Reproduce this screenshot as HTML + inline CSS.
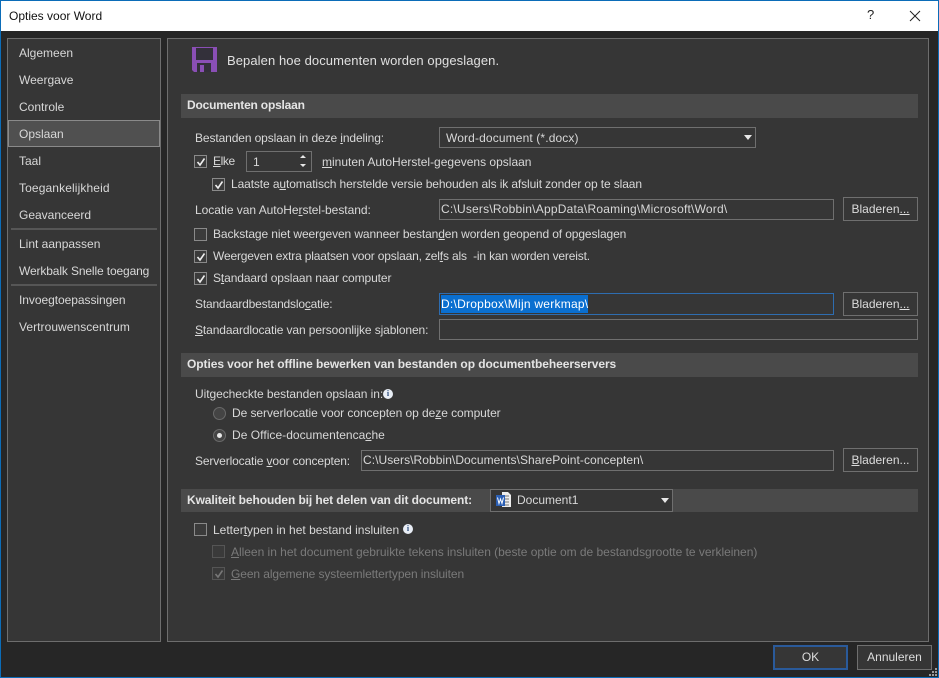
<!DOCTYPE html>
<html lang="nl"><head><meta charset="utf-8"><title>Opties voor Word</title>
<style>
html,body{margin:0;padding:0;background:#262626}
#w{position:relative;width:939px;height:678px;overflow:hidden;background:#262626;font:12px/16px "Liberation Sans",sans-serif;color:#d8d8d8}
#w div,#w span.t{position:absolute;box-sizing:border-box}
.t{white-space:nowrap}
.b{font-weight:bold;color:#e4e4e4}
.p{background:#363636;border:1px solid #6d6d6d}
.h{background:#4a4a4a}
.i{border:1px solid #6f6f6f;background:#363636}
.btn{border:1px solid #6f6f6f;background:#363636;text-align:center;line-height:22px;color:#dcdcdc;white-space:nowrap}
.c{width:13px;height:13px;border:1px solid #8a8a8a;background:#3b3b3b}
.c svg{position:absolute;left:0;top:0}
.dis{color:#7a7a7a}
.r{width:13px;height:13px;border-radius:50%;border:1px solid #6a6a6a;background:#444}
.sep{background:#565656;height:2px}
.inf{width:10px;height:10px;border-radius:50%;background:#e8edf5;color:#2a4a7a;font:bold 8px/10px "Liberation Serif",serif;text-align:center}
</style></head><body>
<div id="w">
<div style="left:0;top:0;width:939px;height:31px;background:#fff"></div>
<div style="left:0;top:0;width:939px;height:1px;background:#0b6cb8"></div>
<div style="left:0;top:0;width:1px;height:678px;background:#0b6cb8"></div>
<div style="left:938px;top:0;width:1px;height:678px;background:#0b6cb8"></div>
<div style="left:0;top:677px;width:939px;height:1px;background:#0b6cb8"></div>
<span class="t" style="left:9px;top:8px;color:#111">Opties voor Word</span>
<span class="t" style="left:867px;top:7px;color:#222;font-size:13px">?</span>
<svg style="position:absolute;left:909px;top:10px" width="12" height="12"><path d="M1 1L11 11M11 1L1 11" stroke="#222" stroke-width="1" fill="none"/></svg>

<div class="p" style="left:7px;top:38px;width:154px;height:604px"></div>
<div class="p" style="left:167px;top:38px;width:762px;height:604px"></div>

<span class="t" style="left:19px;top:45px">Algemeen</span>
<span class="t" style="left:19px;top:72px">Weergave</span>
<span class="t" style="left:19px;top:99px">Controle</span>
<div style="left:8px;top:120px;width:152px;height:27px;background:#505050;border:1px solid #8a8a8a"></div>
<span class="t" style="left:19px;top:126px">Opslaan</span>
<span class="t" style="left:19px;top:153px">Taal</span>
<span class="t" style="left:19px;top:180px;letter-spacing:.12px">Toegankelijkheid</span>
<span class="t" style="left:19px;top:207px">Geavanceerd</span>
<div class="sep" style="left:11px;top:228px;width:146px"></div>
<span class="t" style="left:19px;top:236px">Lint aanpassen</span>
<span class="t" style="left:19px;top:263px;letter-spacing:-.13px">Werkbalk Snelle toegang</span>
<div class="sep" style="left:11px;top:284px;width:146px"></div>
<span class="t" style="left:19px;top:292px;letter-spacing:-.05px">Invoegtoepassingen</span>
<span class="t" style="left:19px;top:319px;letter-spacing:.05px">Vertrouwenscentrum</span>

<svg style="position:absolute;left:192px;top:47px" width="25" height="25" viewBox="0 0 25 25"><path d="M0 0H25V25H2L0 23Z" fill="#8a4fb5"/><rect x="4" y="1" width="17" height="12" fill="#33303a"/><rect x="5" y="16" width="14" height="9" fill="#33303a"/><rect x="8" y="18" width="4" height="7" fill="#8a4fb5"/></svg>
<span class="t" style="left:227px;top:53px;font-size:13px;color:#e0e0e0;letter-spacing:.08px">Bepalen hoe documenten worden opgeslagen.</span>

<div class="h" style="left:181px;top:94px;width:737px;height:24px"></div>
<span class="t b" style="left:187px;top:97px;letter-spacing:-.2px">Documenten opslaan</span>

<span class="t" style="left:195px;top:130px;letter-spacing:-.11px">Bestanden opslaan in deze <u>i</u>ndeling:</span>
<div class="i" style="left:439px;top:127px;width:317px;height:21px"></div>
<span class="t" style="left:446px;top:130px;letter-spacing:.13px">Word-document (*.docx)</span>
<svg style="position:absolute;left:744px;top:135px" width="9" height="6"><path d="M0 0H8L4 5Z" fill="#e8e8e8"/></svg>

<div class="c" style="left:194px;top:155px"><svg width="13" height="13"><path d="M2.5 6L5 9L9.5 2.5" stroke="#eee" stroke-width="1.6" fill="none"/></svg></div>
<span class="t" style="left:213px;top:153px;letter-spacing:-.4px"><u>E</u>lke</span>
<div class="i" style="left:246px;top:151px;width:66px;height:21px"></div>
<span class="t" style="left:253px;top:154px">1</span>
<svg style="position:absolute;left:299px;top:154px" width="9" height="14"><path d="M1 4H7L4 1ZM1 10H7L4 13Z" fill="#e8e8e8"/></svg>
<span class="t" style="left:322px;top:154px"><u>m</u>inuten AutoHerstel-gegevens opslaan</span>

<div class="c" style="left:212px;top:178px"><svg width="13" height="13"><path d="M2.5 6L5 9L9.5 2.5" stroke="#eee" stroke-width="1.6" fill="none"/></svg></div>
<span class="t" style="left:231px;top:176px;letter-spacing:-.11px">Laatste a<u>u</u>tomatisch herstelde versie behouden als ik afsluit zonder op te slaan</span>

<span class="t" style="left:195px;top:202px;letter-spacing:-.03px">Locatie van AutoHe<u>r</u>stel-bestand:</span>
<div class="i" style="left:439px;top:199px;width:395px;height:21px"></div>
<span class="t" style="left:441px;top:201px;letter-spacing:.21px">C:\Users\Robbin\AppData\Roaming\Microsoft\Word\</span>
<div class="btn" style="left:843px;top:197px;width:75px;height:24px">Bladeren<u>...</u></div>

<div class="c" style="left:194px;top:228px"></div>
<span class="t" style="left:213px;top:226px;letter-spacing:-.11px">Backstage niet weergeven wanneer bestan<u>d</u>en worden geopend of opgeslagen</span>
<div class="c" style="left:194px;top:250px"><svg width="13" height="13"><path d="M2.5 6L5 9L9.5 2.5" stroke="#eee" stroke-width="1.6" fill="none"/></svg></div>
<span class="t" style="left:213px;top:248px;letter-spacing:-.17px">Weergeven extra plaatsen voor opslaan, zel<u>f</u>s als &nbsp;-in kan worden vereist.</span>
<div class="c" style="left:194px;top:272px"><svg width="13" height="13"><path d="M2.5 6L5 9L9.5 2.5" stroke="#eee" stroke-width="1.6" fill="none"/></svg></div>
<span class="t" style="left:213px;top:270px;letter-spacing:-.1px">S<u>t</u>andaard opslaan naar computer</span>

<span class="t" style="left:195px;top:296px;letter-spacing:-.19px">Standaardbestandslo<u>c</u>atie:</span>
<div class="i" style="left:439px;top:293px;width:395px;height:22px;border-color:#2e6db0"></div>
<div style="left:441px;top:295px;width:147px;height:18px;background:#0a6fd0"></div>
<span class="t" style="left:441px;top:296px;color:#fff;letter-spacing:.25px">D:\Dropbox\Mijn werkmap\</span>
<div class="btn" style="left:843px;top:292px;width:75px;height:24px">Bladeren<u>...</u></div>
<span class="t" style="left:195px;top:322px;letter-spacing:-.11px"><u>S</u>tandaardlocatie van persoonlijke sjablonen:</span>
<div class="i" style="left:439px;top:319px;width:479px;height:21px"></div>

<div class="h" style="left:181px;top:353px;width:737px;height:24px"></div>
<span class="t b" style="left:187px;top:356px;letter-spacing:-.07px">Opties voor het offline bewerken van bestanden op documentbeheerservers</span>

<span class="t" style="left:195px;top:386px;letter-spacing:-.06px">Uitgecheckte bestanden opslaan in:</span>
<div class="inf" style="left:383px;top:389px">i</div>
<div class="r" style="left:213px;top:407px"></div>
<span class="t" style="left:232px;top:405px;letter-spacing:-.06px">De serverlocatie voor concepten op de<u>z</u>e computer</span>
<div class="r" style="left:213px;top:429px"></div>
<div style="left:217px;top:433px;width:5px;height:5px;border-radius:50%;background:#e8e8e8"></div>
<span class="t" style="left:232px;top:427px;letter-spacing:.04px">De Office-documentenca<u>c</u>he</span>

<span class="t" style="left:195px;top:453px;letter-spacing:-.13px">Serverlocatie <u>v</u>oor concepten:</span>
<div class="i" style="left:361px;top:450px;width:473px;height:21px"></div>
<span class="t" style="left:363px;top:452px;letter-spacing:.06px">C:\Users\Robbin\Documents\SharePoint-concepten\</span>
<div class="btn" style="left:843px;top:448px;width:75px;height:24px"><u>B</u>laderen...</div>

<div class="h" style="left:181px;top:489px;width:737px;height:23px"></div>
<span class="t b" style="left:187px;top:492px;letter-spacing:-.1px">Kwaliteit behouden bij het delen van dit document:</span>
<div class="i" style="left:490px;top:489px;width:183px;height:23px"></div>
<svg style="position:absolute;left:496px;top:492px" width="16" height="16" viewBox="0 0 16 16"><path d="M6 0H12L15 3V15H6Z" fill="#eee"/><path d="M8 4H13M8 7H13M8 10H13M8 13H13" stroke="#777"/><rect x="0" y="3" width="9" height="11" fill="#2b5fb4"/><path d="M1.5 5.5L3 11.5L4.5 7L6 11.5L7.5 5.5" stroke="#fff" fill="none"/></svg>
<span class="t" style="left:517px;top:492px">Document1</span>
<svg style="position:absolute;left:661px;top:498px" width="9" height="6"><path d="M0 0H8L4 5Z" fill="#e8e8e8"/></svg>

<div class="c" style="left:194px;top:523px"></div>
<span class="t" style="left:213px;top:522px">Letter<u>t</u>ypen in het bestand insluiten</span>
<div class="inf" style="left:403px;top:524px">i</div>
<div class="c" style="left:212px;top:545px;border-color:#555;background:#3a3a3a"></div>
<span class="t dis" style="left:231px;top:544px;letter-spacing:-.02px"><u>A</u>lleen in het document gebruikte tekens insluiten (beste optie om de bestandsgrootte te verkleinen)</span>
<div class="c" style="left:212px;top:567px;border-color:#555;background:#3a3a3a"><svg width="13" height="13"><path d="M2.5 6L5 9L9.5 2.5" stroke="#777" stroke-width="1.6" fill="none"/></svg></div>
<span class="t dis" style="left:231px;top:566px;letter-spacing:-.09px"><u>G</u>een algemene systeemlettertypen insluiten</span>

<div class="btn" style="left:773px;top:645px;width:75px;height:25px;border:2px solid #2a5a9a;line-height:21px">OK</div>
<div class="btn" style="left:857px;top:645px;width:75px;height:25px">Annuleren</div>
<svg style="position:absolute;left:928px;top:667px" width="10" height="10"><path d="M7 1h2v2H7zM4 4h2v2H4zM7 4h2v2H7zM1 7h2v2H1zM4 7h2v2H4zM7 7h2v2H7z" fill="#9a9a9a"/></svg>
</div>
</body></html>
